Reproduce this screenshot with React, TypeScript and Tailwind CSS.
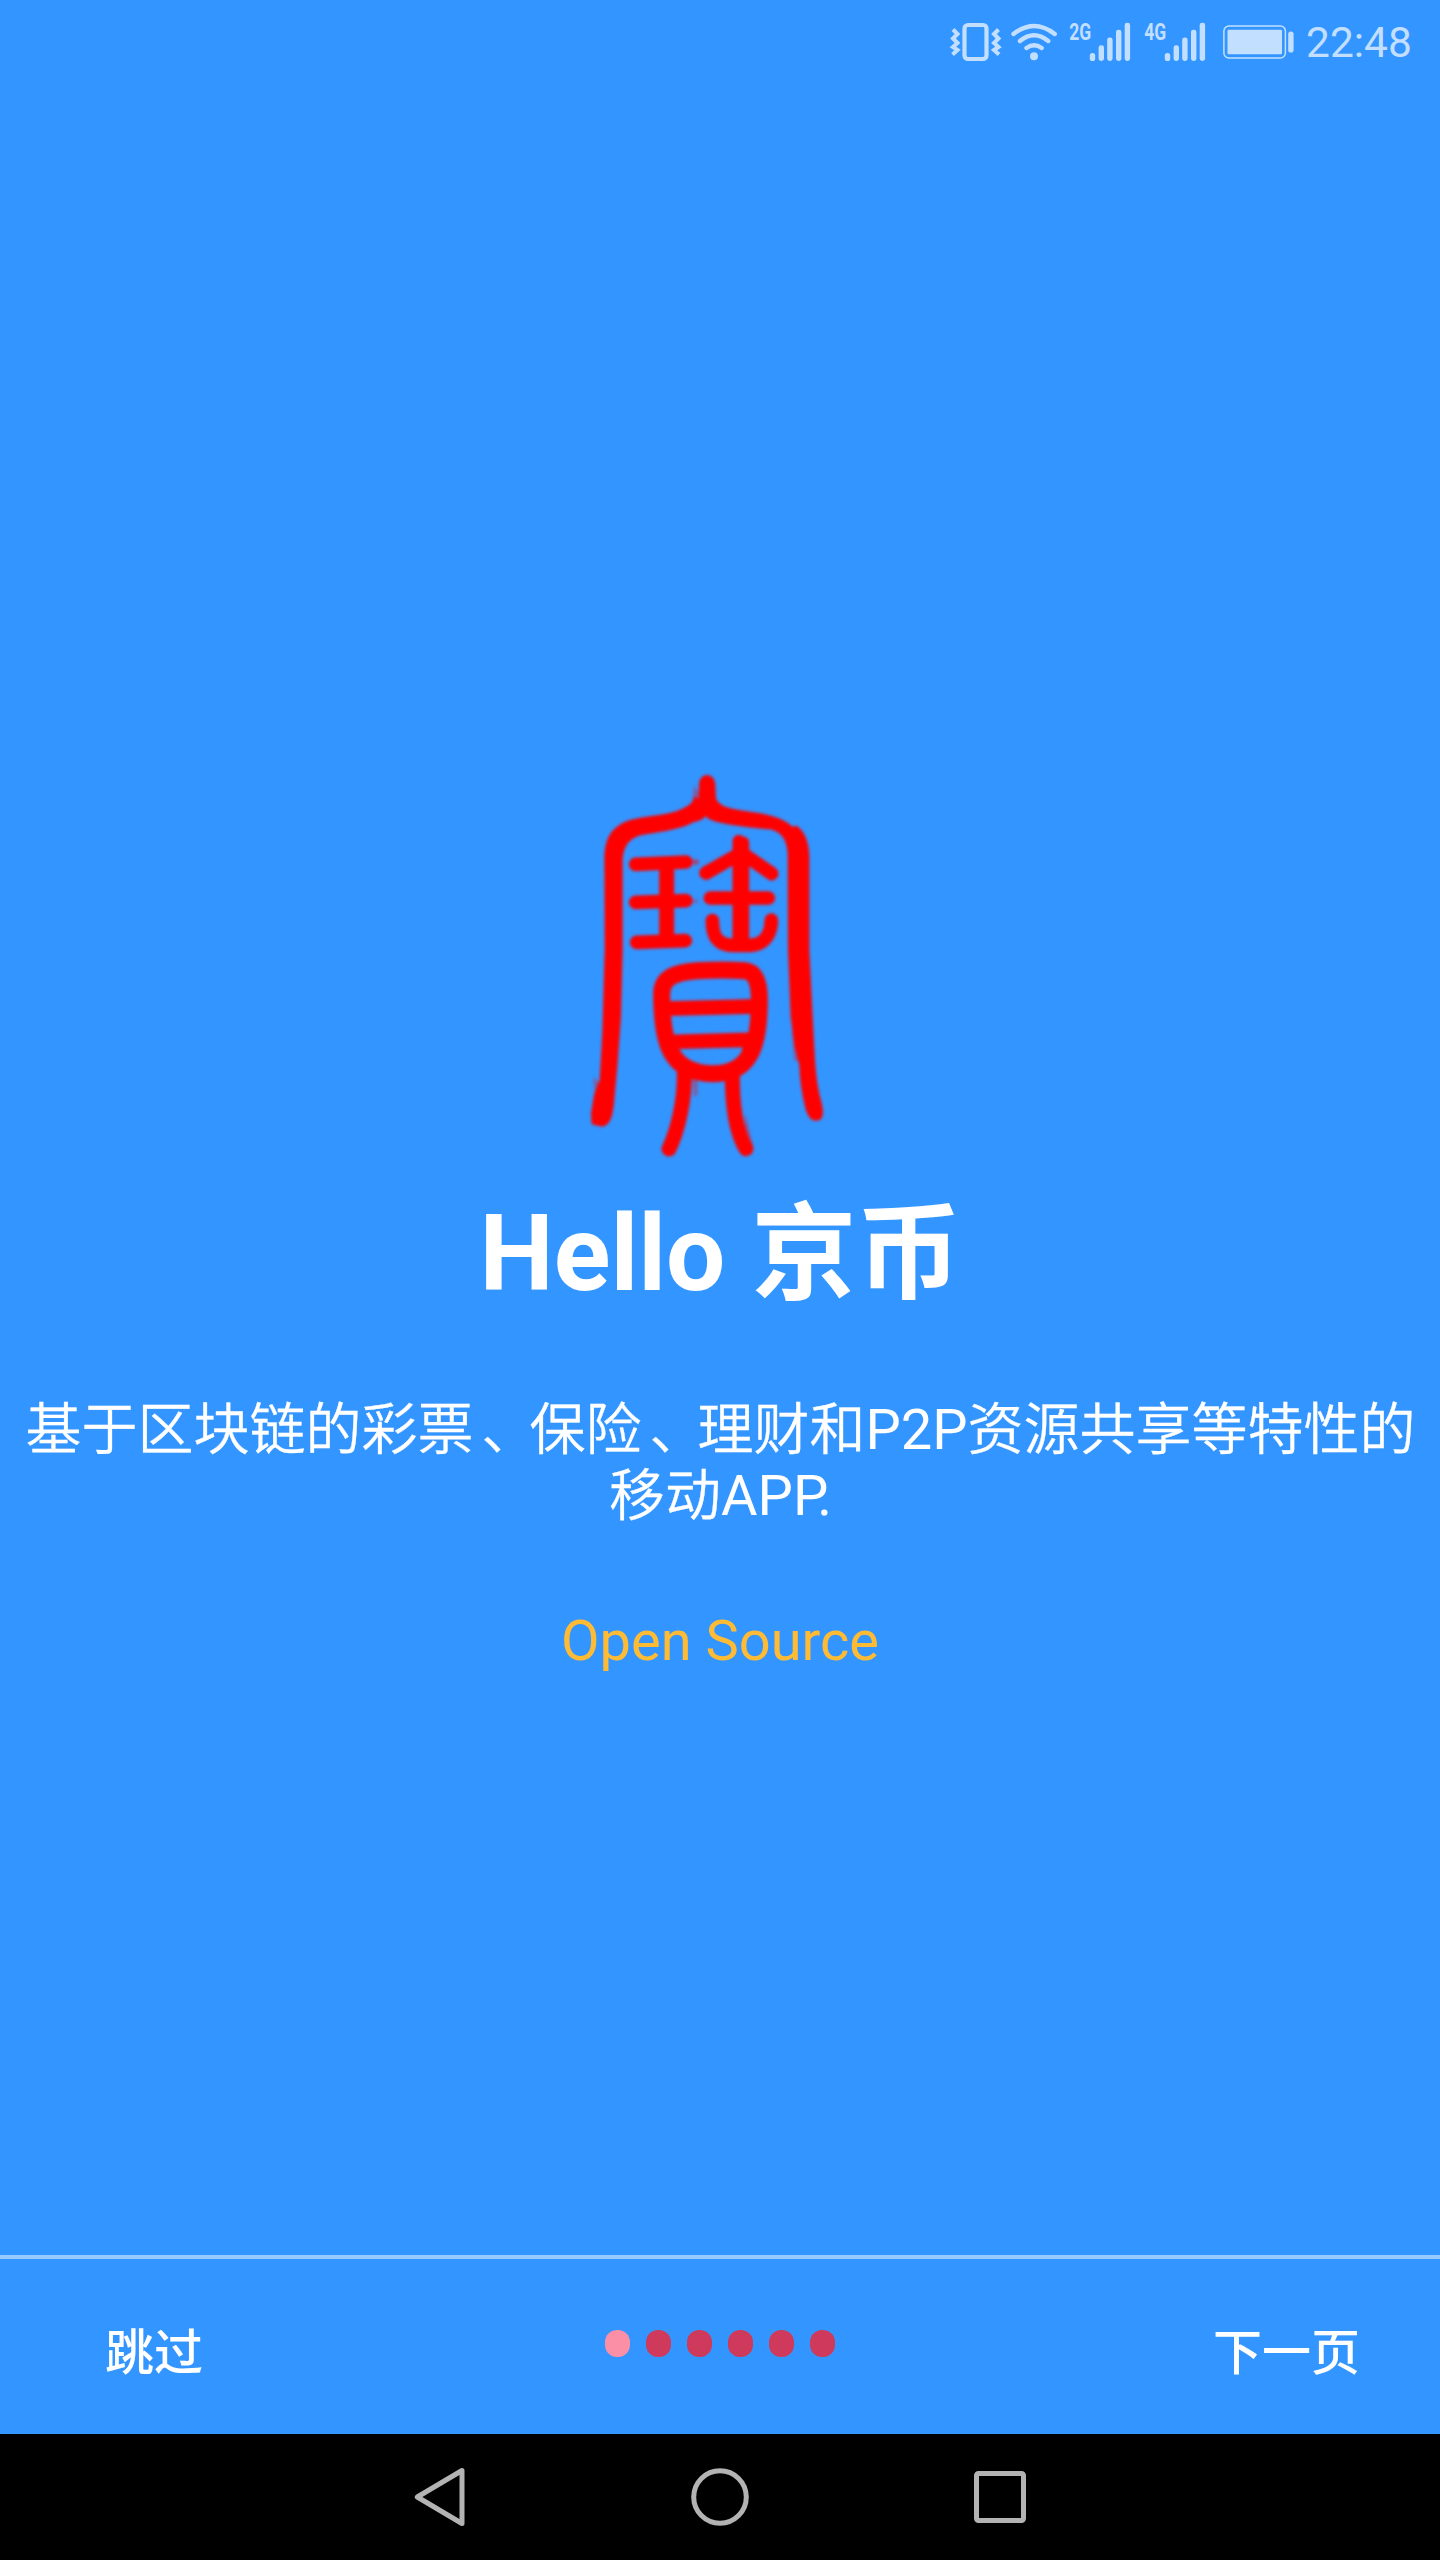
const dots = [true, false, false, false, false, false];

function SignalBars() {
  return (
    <g fill="#c2dfff">
      <rect x="0" y="33" width="5.4" height="8" rx="2.6" />
      <rect x="8.8" y="25.3" width="5.4" height="15.7" rx="2.4" />
      <rect x="17.4" y="17.5" width="5.4" height="23.5" rx="2.4" />
      <rect x="26.2" y="9.7" width="5.4" height="31.3" rx="2.4" />
      <rect x="34.9" y="2.8" width="5.4" height="38.2" rx="2.4" />
    </g>
  );
}

function Signal({ label }: { label: string }) {
  return (
    <svg className="-mt-5 h-[70px] w-[75px] shrink-0" viewBox="0 -20 75 70">
      <text
        x="4.2"
        y="20.2"
        fill="#c2dfff"
        fontSize="24.5"
        fontWeight="700"
        textLength="22"
        lengthAdjust="spacingAndGlyphs"
        className="font-[Roboto]"
      >
        {label}
      </text>
      <g transform="translate(24.8 0)">
        <SignalBars />
      </g>
    </svg>
  );
}

function StatusBar() {
  return (
    <div className="flex h-[84px] shrink-0 items-start justify-end pt-5 text-[#c2dfff]">
      <svg className="h-[50px] w-[60px] shrink-0" viewBox="945 20 60 50" fill="none" stroke="currentColor">
        <rect x="964.5" y="25" width="22" height="34" rx="3.5" strokeWidth="4.2" />
        <path
          d="M953 29.5L957.5 34L953 38.5L957.5 43L953 47L957.5 50L952.5 54.5M998.5 29.5L994 34L998.5 38.5L994 43L998.5 47L994 50L999 54.5"
          strokeWidth="4"
        />
      </svg>
      <svg className="h-[50px] w-[60px] shrink-0" viewBox="1005 20 60 50" fill="none" stroke="currentColor" strokeWidth="4.4" strokeLinecap="round">
        <path d="M1013.5 34Q1034 18 1054.8 34M1020 41Q1034 29.5 1048.2 41M1026.5 48Q1034 42.5 1041.7 48" />
        <circle cx="1034" cy="56.3" r="4" fill="currentColor" stroke="none" />
      </svg>
      <Signal label="2G" />
      <Signal label="4G" />
      <svg className="h-[50px] w-[85px] shrink-0" viewBox="1215 20 85 50">
        <rect x="1223.9" y="26" width="61.5" height="32" rx="5" fill="none" stroke="currentColor" strokeWidth="1.5" />
        <rect x="1227.5" y="29.7" width="54.5" height="24.6" rx="1.2" fill="currentColor" />
        <rect x="1288.2" y="31.5" width="5.4" height="21" rx="2.6" fill="currentColor" />
      </svg>
      <span className="ml-[6px] w-[134px] text-[42.5px] leading-[46px]">22:48</span>
    </div>
  );
}

function Seal() {
  return (
    <svg className="mr-[30px] h-[410px] w-[270px] shrink-0 blur-[1.6px]" viewBox="0 0 810 1230">
      <path
        fill="#f00"
        d="M387 72C390 36 432 36 436 72L438 115C450 147 500 148 570 160C612 167 645 180 668 200L680 197C707 216 717 250 718 290L718 570L728 770L735 900Q740 980 755 1030Q768 1082 738 1082Q715 1082 705 1040Q690 980 688 915L674 860L662 770L654 570L653 280C650 240 635 216 600 208C560 206 480 196 445 187C425 182 413 176 406 168C398 180 385 184 372 186C340 204 300 212 220 224C178 232 158 258 158 310L158 570L153 770L143 910L132 1030C128 1070 120 1096 97 1100L65 1093L63 1060L72 1005L89 960L97 820L104 570L103 300C103 240 120 200 180 180C220 168 290 166 330 149C358 137 368 130 374 108L386 118Z"
      />
      <g fill="none" stroke="#f00" strokeLinecap="round" strokeWidth="41">
        <path d="M197 313L348 306M197 427L348 422M200 547L346 542" />
        <path d="M290 312V542" strokeWidth="45" strokeLinecap="butt" />
        <path d="M506 243V555M519 248V555" strokeWidth="37" />
        <path d="M408 339L505 284M520 282L605 341M421 414H595" />
        <path d="M427 482C427 530 442 555 490 556H540C590 554 604 514 604 480" />
        <path
          d="M275 700C276 652 315 637 380 632Q460 628 525 632C558 636 568 668 568 720C568 850 545 941 430 941C300 941 275 850 275 700Z"
          strokeWidth="51"
        />
        <path d="M290 746L560 739M290 846L560 839" strokeWidth="44" strokeLinecap="butt" />
        <path d="M343 935C345 1020 324 1110 297 1167M487 935C486 1035 500 1120 528 1166" strokeWidth="45" />
      </g>
      <g fill="#f00">
        <path d="M315 846L335 930L390 950L345 915ZM523 846L540 840L525 920L470 950L505 905Z" />
        <path d="M526 1060L550 1160L520 1130ZM368 955H382V1005L372 1010Z" opacity=".4" />
        <path d="M372 75L388 100V125H367ZM70 950L90 970L75 1030ZM665 810L690 830L684 905L672 900Z" opacity=".35" />
        <circle cx="378" cy="306" r="9" opacity=".5" />
        <circle cx="378" cy="424" r="7" opacity=".3" />
      </g>
    </svg>
  );
}

function Comma() {
  return <span className="ml-2 tracking-[-8px]">、</span>;
}

export default function App() {
  return (
    <div className="flex h-[2560px] w-[1440px] flex-col overflow-hidden bg-[#3395ff] font-[Roboto,'Noto_Sans_CJK_SC',sans-serif] text-white">
      <StatusBar />
      <main className="flex flex-1 flex-col items-center pt-[676px]">
        <Seal />
        <h1 className="mt-5 pl-px text-[105px] leading-[130px] font-bold whitespace-nowrap">Hello 京币</h1>
        <p className="mt-[77px] pl-px text-center text-[56px] leading-[66px] font-[350] whitespace-nowrap [-webkit-text-stroke:0.3px_white]">
          基于区块链的彩票
          <Comma />
          保险
          <Comma />
          理财和<span className="font-normal [-webkit-text-stroke:0]">P2P</span>资源共享等特性的
          <br />
          移动
          <span className="font-normal [-webkit-text-stroke:0]">
            AP<span className="tracking-[-11px]">P</span>.
          </span>
        </p>
        <p className="mt-[79px] text-[56px] leading-[66px] text-[#ffbb33]">Open Source</p>
      </main>
      <footer className="flex h-[179px] shrink-0 justify-between border-t-4 border-[#99caff] pr-20 pl-[105px]">
        <button className="mt-[65px] h-[60px] w-[147px] text-left text-[49px] leading-[60px] font-medium">跳过</button>
        <div className="mt-[71px] mr-[25px] flex gap-4">
          {dots.map((active, i) => (
            <span key={i} className={active ? "h-[27px] w-[25px] rounded-[12px] bg-[#fa8fa6]" : "h-[27px] w-[25px] rounded-[12px] bg-[#cf3a5c]"} />
          ))}
        </div>
        <button className="mt-[65px] h-[60px] w-[147px] text-[49px] leading-[60px] font-medium">下一页</button>
      </footer>
      <nav className="flex h-[126px] shrink-0 items-center justify-center gap-[220px] bg-black">
        <svg className="h-[60px] w-[60px]" viewBox="410 2467 60 60" fill="none" stroke="#b3b3b3" strokeWidth="5" strokeLinejoin="round">
          <path d="M462 2470.5V2523.5L417.3 2497Z" />
        </svg>
        <svg className="h-[60px] w-[60px]" viewBox="690 2467 60 60" fill="none" stroke="#b3b3b3" strokeWidth="5">
          <circle cx="720" cy="2497" r="26.3" />
        </svg>
        <svg className="h-[60px] w-[60px]" viewBox="970 2467 60 60" fill="none" stroke="#b3b3b3" strokeWidth="5">
          <rect x="976.5" y="2473.5" width="47" height="47" rx="2" />
        </svg>
      </nav>
    </div>
  );
}
